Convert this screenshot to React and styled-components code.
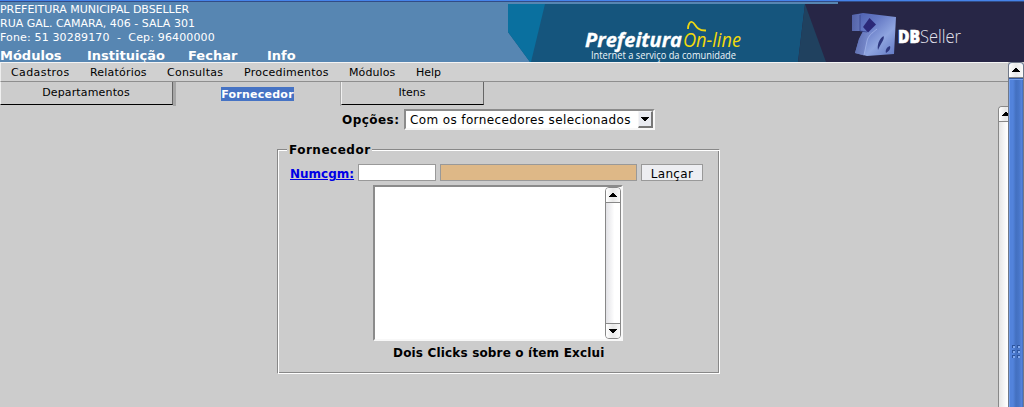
import React from "react";
import styled, { createGlobalStyle } from "styled-components";

const Global = createGlobalStyle`
  *{box-sizing:border-box}
  body{margin:0;background:#ccc;overflow:hidden;font-family:"DejaVu Sans",sans-serif;color:#000}
`;
const Page = styled.div`width:1024px;height:407px;display:flex;flex-direction:column;overflow:hidden;`;
const Header = styled.header`height:62px;flex:none;display:flex;background:#5786b2;border-top:1px solid #4583ea;box-shadow:inset 0 1px #324c86;`;
const Info = styled.div`width:508px;padding-top:2px;color:#fff;`;
const Line = styled.div`height:14px;line-height:14px;font-size:11px;white-space:pre;letter-spacing:${p => p.$ls || 0}px;`;
const TopNav = styled.nav`display:flex;height:14px;margin-top:3px;font-weight:bold;font-size:13px;line-height:15px;`;
const TopItem = styled.span`width:${p => p.$w}px;white-space:nowrap;`;
const Banner = styled.svg`display:block;width:516px;height:61px;`;
const Body = styled.div`flex:1;display:flex;min-height:0;`;
const Main = styled.main`width:1008px;display:flex;flex-direction:column;`;
const MenuBar = styled.nav`height:20px;flex:none;display:flex;background:#d0d0d0;border-top:1px solid #f4f4f4;border-left:1px solid #eee;border-bottom:1px solid #8e8e8e;padding-left:10px;font-size:11px;line-height:19px;`;
const MenuItem = styled.span`width:${p => p.$w}px;letter-spacing:${p => p.$ls || 0}px;white-space:nowrap;`;
const Frame = styled.div`flex:1;display:flex;min-height:0;`;
const Content = styled.div`width:998px;`;
const Tabs = styled.div`display:flex;height:24px;font-size:11px;text-align:center;`;
const Tab = styled.div`width:${p => p.$w}px;height:23px;line-height:21px;border-left:1px solid #f0f0f0;border-right:1px solid #666;border-bottom:1px solid #000;letter-spacing:${p => p.$ls || 0}px;padding-right:${p => p.$pr || 0}px;`;
const ActiveTab = styled.div`width:168px;height:24px;border-left:3px solid #a6a6a6;border-right:1px solid #aaa;padding:5px 1px 0 0;`;
const Selected = styled.span`display:inline-block;height:14px;line-height:15px;background:#4673c4;color:#fff;font-weight:bold;width:73px;letter-spacing:.25px;vertical-align:top;white-space:nowrap;`;
const Options = styled.div`display:flex;align-items:center;height:21px;margin:3px 0 0 342px;`;
const Label = styled.label`width:62px;font-size:12px;font-weight:bold;white-space:nowrap;letter-spacing:.45px;`;
const Select = styled.div`width:251px;height:21px;background:#fff;border:2px solid;border-color:#8b8b8b #f8f8f8 #f8f8f8 #8b8b8b;display:flex;align-items:center;justify-content:space-between;padding-left:4px;font-size:12px;white-space:nowrap;`;
const SelectText = styled.span`letter-spacing:.38px;line-height:17px;padding-top:1px;`;
const DropButton = styled.div`width:15px;height:17px;background:#e9ebf1;border:1px solid;border-color:#f5f5f5 #777 #777 #f5f5f5;border-right-width:2px;border-bottom-width:2px;display:flex;align-items:center;justify-content:center;`;
const Fieldset = styled.fieldset`width:443px;height:233px;margin:11px 0 0 277px;padding:0 1px;border:1px solid;border-color:#888 #fff #fff #888;box-shadow:inset 1px 1px #fff,inset -1px -1px #888;`;
const Legend = styled.legend`margin-left:8px;width:85px;height:17px;padding:0 2px;background:#ccc;font-size:12px;font-weight:bold;line-height:18px;white-space:nowrap;letter-spacing:.5px;`;
const Row = styled.div`height:17px;display:flex;gap:4px;margin:6px 0 0 11px;`;
const Link = styled.a`width:64px;color:#0000e6;text-decoration:underline;font-weight:bold;font-size:12px;line-height:20px;white-space:nowrap;`;
const Input = styled.div`width:${p => p.$w}px;height:17px;border:1px solid #999;background:${p => p.$bg || "#fff"};`;
const Button = styled.button`width:62px;height:17px;border:1px solid #999;background:#edeef2;padding:2px 0 0;font:12px/15px "DejaVu Sans",sans-serif;color:#000;letter-spacing:.3px;`;
const List = styled.div`width:250px;height:156px;margin:4px 0 0 94px;background:#fff;border:2px solid;border-color:#8b8b8b #f8f8f8 #f8f8f8 #8b8b8b;display:flex;justify-content:flex-end;`;
const ListScroll = styled.div`width:16px;height:152px;border:1px solid #888;border-radius:4px;background:linear-gradient(90deg,#e2e2e6,#fff 60%);display:flex;flex-direction:column;justify-content:space-between;overflow:hidden;`;
const Arrow = styled.div`height:15px;flex:none;display:flex;align-items:center;justify-content:center;border:0 solid #888;border-${p => p.$down ? "top" : "bottom"}-width:1px;background:linear-gradient(90deg,#fff,#e8e8e8 50%,#fafafa);`;
const Hint = styled.div`margin:5px 0 0 114px;font-size:12px;font-weight:bold;line-height:15px;white-space:nowrap;letter-spacing:.17px;`;
const InnerScroll = styled.div`width:10px;margin-top:24px;border:1px solid #888;border-right:0;border-bottom:0;border-radius:4px 0 0 0;background:linear-gradient(90deg,#e5e5e5,#fff 90%);overflow:hidden;`;
const WideArrow = styled.div`width:13px;`;
const PageScroll = styled.div`width:16px;border:1px solid #707888;border-bottom:0;border-radius:4px 4px 0 0;overflow:hidden;background:#4775c8;display:flex;flex-direction:column;`;
const Thumb = styled.div`flex:1;border-top:1px solid #3358a0;box-shadow:inset 1px 1px #76a2ed;background:linear-gradient(90deg,#5283dc 0 4px,#4370c0 7px,#4775c8 10px,#5685dc 13px,#3865b8);padding:265px 0 0 3px;`;

const Triangle = ({ down }) => (
  <svg width="8" height="5" viewBox="0 0 8 5" shapeRendering="crispEdges">
    <path d={down ? "M0 0h8v1h-1v1h-1v1h-1v1h-2v-1h-1v-1h-1v-1h-1z" : "M0 4h8v-1h-1v-1h-1v-1h-1v-1h-2v1h-1v1h-1v1h-1z"} />
  </svg>
);

const Brand = () => (
  <Banner viewBox="508 1 516 61">
    <defs>
      <linearGradient id="face" x1="0" y1="0" x2="1" y2="1">
        <stop offset="0" stopColor="#4a5bab" /><stop offset=".35" stopColor="#6478c4" /><stop offset=".65" stopColor="#8fa5e0" /><stop offset="1" stopColor="#5f76c2" />
      </linearGradient>
      <linearGradient id="side"><stop stopColor="#5563a4" /><stop offset="1" stopColor="#7d90d2" /></linearGradient>
    </defs>
    <path d="M508 4H806V62H530L508 32z" fill="#15557d" />
    <path d="M508 4H545L531 62H530L508 32z" fill="#0a709f" />
    <path d="M805 4h33V2h186v60H798z" fill="#272646" />
    <path d="M805 4L798 62h28z" fill="#20415f" />
    <text x="585" y="47" textLength="97" lengthAdjust="spacingAndGlyphs" fontFamily="Open Sans" fontSize="20" fontWeight="700" fontStyle="italic" fill="#fff" stroke="#fff" strokeWidth=".3">Prefeitura</text>
    <text x="683" y="47" textLength="58" lengthAdjust="spacingAndGlyphs" fontFamily="Open Sans" fontSize="20" fontStyle="italic" fill="#f2da0b">On-line</text>
    <path d="M688 29C688 24 690 21.5 692 22C696 23 695 31 706 30.5" fill="none" stroke="#eed712" strokeWidth="1.8" />
    <text x="591" y="58.5" textLength="145" lengthAdjust="spacingAndGlyphs" fontFamily="Open Sans" fontSize="10" fill="#eef5fa">Internet a serviço da comunidade</text>
    <path d="M852 15L863 13L896 17L894 54L867 56L855 53L859 39L863 31L852 31z" fill="url(#face)" />
    <path d="M852 15L860 14V31H852zM863 32L859 39L855 53L864 55.500L867 40L872 32z" fill="url(#side)" opacity=".75" />
    <path d="M860 15V31L867 32" fill="none" stroke="#35438c" strokeWidth=".8" />
    <path d="M869.500 18L876 24.500L868 32.500L863 27z" fill="#2b2878" />
    <path d="M864 55L867 41C868 36 872 33 877 29" fill="none" stroke="#a3b5ea" strokeWidth=".8" />
    <path d="M878 50C877 45 879 39 883.500 36C885 39 881 43 878 50zM886 53C885 50 887 47 890 46C891 49 889 51 886 53z" fill="#2e377f" />
    <text x="898" y="43" textLength="22" lengthAdjust="spacingAndGlyphs" fontFamily="Open Sans" fontSize="17" fontWeight="800" fill="#fff" stroke="#fff" strokeWidth=".6">DB</text>
    <text x="920" y="43" textLength="41" lengthAdjust="spacingAndGlyphs" fontFamily="Open Sans" fontSize="18" fontWeight="300" fill="#e3e3ed">Seller</text>
  </Banner>
);

const topItems = [["Módulos", 87], ["Instituição", 101], ["Fechar", 79], ["Info", 40]];
const menuItems = [["Cadastros", 79, 0.4], ["Relatórios", 77, 0.2], ["Consultas", 77, 0.25], ["Procedimentos", 105, 0.25], ["Módulos", 67, 0.1], ["Help", 40, 0]];

export default function App() {
  return (
    <Page>
      <Global />
      <Header>
        <Info>
          <Line $ls={-0.04}>PREFEITURA MUNICIPAL DBSELLER</Line>
          <Line>RUA GAL. CAMARA, 406 - SALA 301</Line>
          <Line $ls={0.15}>{"Fone: 51 30289170  -  Cep: 96400000"}</Line>
          <TopNav>{topItems.map(([t, w]) => <TopItem key={t} $w={w}>{t}</TopItem>)}</TopNav>
        </Info>
        <Brand />
      </Header>
      <Body>
        <Main>
          <MenuBar>{menuItems.map(([t, w, ls]) => <MenuItem key={t} $w={w} $ls={ls}>{t}</MenuItem>)}</MenuBar>
          <Frame>
            <Content>
              <Tabs>
                <Tab $w={173} $pr={1} $ls={0.15}>Departamentos</Tab>
                <ActiveTab><Selected>Fornecedor</Selected></ActiveTab>
                <Tab $w={143} $pr={1}>Itens</Tab>
              </Tabs>
              <Options>
                <Label>Opções:</Label>
                <Select><SelectText>Com os fornecedores selecionados</SelectText><DropButton><Triangle down /></DropButton></Select>
              </Options>
              <Fieldset>
                <Legend>Fornecedor</Legend>
                <Row>
                  <Link>Numcgm:</Link>
                  <Input $w={78} />
                  <Input $w={197} $bg="#deb887" />
                  <Button>Lançar</Button>
                </Row>
                <List><ListScroll><Arrow><Triangle /></Arrow><Arrow $down><Triangle down /></Arrow></ListScroll></List>
                <Hint>Dois Clicks sobre o ítem Exclui</Hint>
              </Fieldset>
            </Content>
            <InnerScroll><WideArrow><Arrow><Triangle /></Arrow></WideArrow></InnerScroll>
          </Frame>
        </Main>
        <PageScroll>
          <Arrow><Triangle /></Arrow>
          <Thumb>
            <svg width="10" height="14" viewBox="0 0 10 14" shapeRendering="crispEdges">
              {[0, 5, 10].map(y => [0, 5].map(x => <React.Fragment key={`${x}-${y}`}><path d={`M${x} ${y}h3v1h-2v2h-1z`} fill="#2c559f" /><path d={`M${x + 1} ${y + 1}h2v2h-2z`} fill="#82a9ed" /></React.Fragment>))}
            </svg>
          </Thumb>
        </PageScroll>
      </Body>
    </Page>
  );
}
